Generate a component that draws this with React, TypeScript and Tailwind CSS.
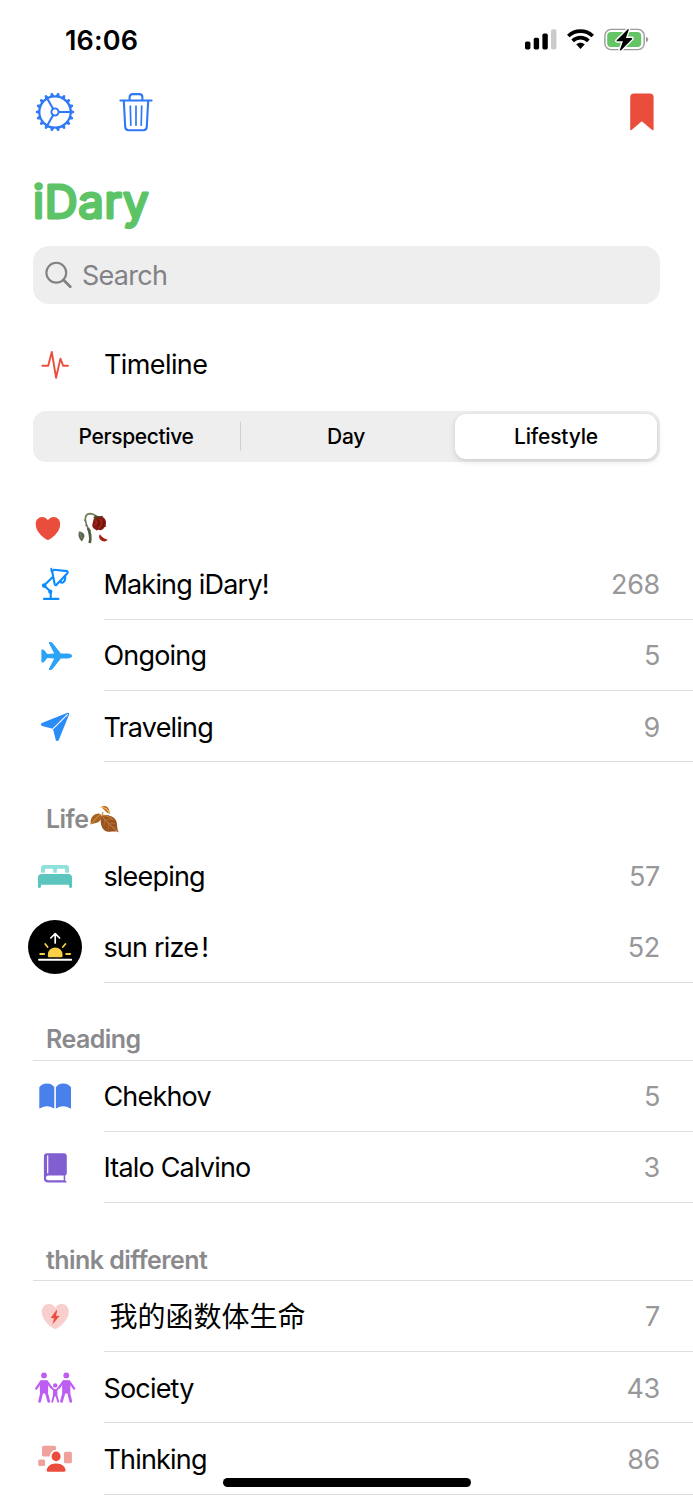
import React from "react";

type IconProps = { children: React.ReactNode };

function Glyph({ children }: IconProps) {
  return (
    <svg width="54" height="54" viewBox="0 0 54 54" fill="none" className="block shrink-0">
      {children}
    </svg>
  );
}

const LampIcon = () => (
  <Glyph>
    <g stroke="#0a8cff" strokeWidth="2.1" strokeLinecap="round" strokeLinejoin="round">
      <path d="M16 41.9H30.4M22.7 41.5V34.8L16 28.4L25 19.8M23.3 11.9L23.8 14.6L26 12.8L39.2 14.1Q40.2 14.8 39.4 16.2L28.5 27.8Q27.2 28.8 26.7 27.2L24.2 14.6" />
      <path d="M32 24.6C34.3 26.6 37.6 25.6 37.2 18.8" />
      <circle cx="16.2" cy="28.6" r="1.3" fill="#0a8cff" />
      <circle cx="22.3" cy="34.7" r="1.1" fill="#0a8cff" />
    </g>
  </Glyph>
);

const PlaneIcon = () => (
  <Glyph>
    <path
      fill="#2ca3f7"
      d="M44.1 27C44.1 28.6 41.6 29.4 39 29.4H32.8L24.4 40.3Q23.8 41 22.8 41H21.4Q20.5 41 20.9 40L26.2 29.4L19.4 29.1L15.8 33.2Q15.5 33.6 14.9 33.6H14.1Q13.4 33.6 13.4 32.8V21.2Q13.4 20.4 14.1 20.4H14.9Q15.5 20.4 15.8 20.8L19.4 24.9L26.2 24.6L20.9 14Q20.5 13 21.4 13H22.8Q23.8 13 24.4 13.7L32.8 24.6H39C41.6 24.6 44.1 25.4 44.1 27Z"
    />
  </Glyph>
);

const PaperPlaneIcon = () => (
  <Glyph>
    <path
      fill="#2b8cf8"
      d="M13.3 23.2L39.4 12.8Q41.6 12.3 41.1 14.4L30.9 39.8Q30 41.6 28.4 40.8Q27.8 40.4 27.6 39.4L25.3 30.1L23.7 28.4L14 25.9Q12 24.6 13.3 23.2Z"
    />
    <path d="M24.2 29.7L39.6 14.3" stroke="#fff" strokeWidth="1.1" />
  </Glyph>
);

const BedIcon = () => (
  <Glyph>
    <path
      fill="#90e0dc"
      d="M13 23.8V18.8Q13 15.9 16 15.9H38Q41 15.9 41 18.8V23.8H37.2V21.2Q37.2 19.8 35.8 19.8H30.2Q28.8 19.8 28.8 21.2V23.8H25.3V21.2Q25.3 19.8 23.9 19.8H18.3Q16.9 19.8 16.9 21.2V23.8Z"
    />
    <path
      fill="#5bc5be"
      d="M14 25H40Q44.1 25 44.1 29V37.6Q44.1 38.9 42.8 38.9H42.2Q41 38.9 41 37.6V35.8H13V37.6Q13 38.9 11.8 38.9H11.2Q9.9 38.9 9.9 37.6V29Q9.9 25 14 25Z"
    />
  </Glyph>
);

const SunriseIcon = () => (
  <Glyph>
    <circle cx="27" cy="27" r="27" fill="#000" />
    <path d="M27.2 23V13.8M22.8 18L27.2 13.6L31.6 18" stroke="#fff" strokeWidth="1.7" strokeLinecap="round" strokeLinejoin="round" />
    <path d="M20.6 37.2Q19.6 37.2 19.8 34.8A7.4 7.4 0 0 1 34.6 34.8Q34.8 37.2 33.8 37.2Z" fill="#f8cf45" />
    <path d="M17.2 24L19.6 27M37.4 24L34.8 27M12.2 34H16.2M38.2 34H42.2" stroke="#f8cf45" strokeWidth="1.8" strokeLinecap="round" />
    <path d="M11 39.8H43.2" stroke="#fff" strokeWidth="1.9" strokeLinecap="round" />
  </Glyph>
);

const OpenBookIcon = () => (
  <Glyph>
    <path
      fill="#4a80ec"
      d="M11.3 18.2Q13.6 14.4 19 14.4Q24.2 14.4 26.3 18.2V39Q26.3 39.5 25.7 39.3Q22.5 37.2 19 37.2Q15.6 37.2 12.2 39.3Q11.3 39.6 11.3 38.8ZM27.9 18.2Q30 14.4 35.2 14.4Q40.6 14.4 43 18.2V38.8Q43 39.6 42 39.3Q38.6 37.2 35.2 37.2Q31.6 37.2 28.5 39.3Q27.9 39.5 27.9 39Z"
    />
  </Glyph>
);

const ClosedBookIcon = () => (
  <Glyph>
    <path
      fill="#815fd1"
      d="M19.2 12.3H35.7Q38.8 12.3 38.8 15.4V32.2Q38.8 33.8 37.2 34.6V39.4L38.4 40.2Q39 41.4 38 41.4H19.6Q15.9 41.4 15.9 37.6V15.6Q15.9 12.3 19.2 12.3Z"
    />
    <path d="M19.7 14.8V31.8" stroke="#fff" strokeWidth="1.2" strokeLinecap="round" />
    <path d="M20 34.6H35.7V39.3H20Q17.9 39 17.9 37Q17.9 34.8 20 34.6Z" fill="#fff" />
  </Glyph>
);

const HeartBoltIcon = () => (
  <Glyph>
    <path
      fill="#f8cfcd"
      d="M27.3 39.2C25.6 39.2 13.7 31.4 13.7 21.8C13.7 17.2 16.7 13.9 20.9 13.9C23.8 13.9 26 15.4 27.3 17.8C28.6 15.4 30.9 13.9 33.7 13.9C37.9 13.9 40.8 17.2 40.8 21.8C40.8 31.4 29 39.2 27.3 39.2Z"
    />
    <path fill="#eb4d3d" d="M28.5 20.1L22.7 28.1L26.1 28.3L24.4 34.4L31.5 26L28 25.7L29.2 20.7Z" />
  </Glyph>
);

const FamilyIcon = () => (
  <Glyph>
    <g fill="#bd5df1" stroke="#bd5df1" strokeLinecap="round" strokeLinejoin="round">
      <circle cx="16" cy="14.4" r="2.9" stroke="none" />
      <circle cx="38.3" cy="14.4" r="2.9" stroke="none" />
      <circle cx="27.2" cy="24.4" r="2.2" stroke="none" />
      <path d="M13.2 19.8H18.8L19.6 24.5L19.4 32H12.6L12.4 24.5Z" strokeWidth="1.2" />
      <path d="M35.5 19.8H41.1L41.9 24.5L41.7 32H34.9L34.7 24.5Z" strokeWidth="1.2" />
      <path fill="none" strokeWidth="2.3" d="M13.2 20.4L8.2 27.6M18.8 20.4L23.1 26.4M35.5 20.4L31.2 26.4M41.1 20.4L46.2 27.6" />
      <path fill="none" strokeWidth="2.8" d="M14.1 30L11.6 40.3M17.9 30L20.8 40.3M36.4 30L33.5 40.3M40.2 30L42.8 40.3" />
      <path fill="none" strokeWidth="1.9" d="M22.8 25.8L26 29.2L25.9 34.5L24.2 40.7M31.6 25.8L28.4 29.2L28.5 34.5L30.2 40.7M27.2 29V34.5" />
    </g>
  </Glyph>
);

const PersonScreensIcon = () => (
  <Glyph>
    <g fill="#f1a19b">
      <rect x="14" y="13.8" width="14" height="10.8" rx="1.6" />
      <rect x="10.2" y="27.5" width="6.9" height="6.5" rx="1.5" />
      <rect x="35.9" y="19.8" width="8" height="11.5" rx="1.5" />
    </g>
    <ellipse cx="28.1" cy="24.3" rx="6.2" ry="6.6" fill="#fff" />
    <ellipse cx="28.1" cy="24.4" rx="4.5" ry="4.9" fill="#eb4d3d" />
    <path fill="#eb4d3d" d="M18.7 38.3C18.7 35 22 31.4 28.1 31.4C34.2 31.4 37.5 35 37.5 38.3Q37.5 39.8 35.9 39.8H20.3Q18.7 39.8 18.7 38.3Z" />
  </Glyph>
);

const teeth = Array.from({ length: 18 }, (_, i) => i * 20);

const GearIcon = () => (
  <svg width="42" height="42" viewBox="-21 -21 42 42" fill="none" stroke="#2f78f6" className="block">
    <circle r="15.7" strokeWidth="2.2" />
    <circle r="3.6" strokeWidth="1.9" />
    <path d="M3.6 0H15.8M-1.8 -3.1L-7.9 -13.7M-1.8 3.1L-7.9 13.7" strokeWidth="2.1" />
    {teeth.map((angle) => (
      <path key={angle} d="M16.4 -1.3L18.6 -.5V.5L16.4 1.3Z" strokeWidth="1.2" strokeLinejoin="round" fill="#2f78f6" transform={`rotate(${angle})`} />
    ))}
  </svg>
);

const TrashIcon = () => (
  <svg width="34" height="42" viewBox="0 0 34 42" fill="none" stroke="#2f78f6" strokeLinecap="round" strokeLinejoin="round" className="block">
    <path strokeWidth="2.1" d="M1.4 9.5H32.6M10.6 9V6.2Q10.6 3.1 13.7 3.1H20.3Q23.4 3.1 23.4 6.2V9M4.8 9.6L6.2 35.8Q6.5 39.2 9.8 39.2H24.2Q27.5 39.2 27.8 35.8L29.2 9.6" />
    <path strokeWidth="1.7" d="M11.3 15L11.8 34.2M17 15V34.2M22.7 15L22.2 34.2" />
  </svg>
);

const StatusIcons = () => (
  <div className="flex items-center">
    <svg width="32" height="24" viewBox="0 0 32 24" className="mr-[10px] block">
      <rect x="0" y="13.6" width="5.4" height="7.8" rx="1.6" />
      <rect x="8.7" y="9.8" width="5.4" height="11.6" rx="1.6" />
      <rect x="17.4" y="5.6" width="5.4" height="15.8" rx="1.6" />
      <rect x="26" y="1.2" width="5.4" height="20.2" rx="1.6" fill="#cbcbcb" />
    </svg>
    <svg width="27" height="24" viewBox="0 0 27 24" fill="none" stroke="#000" strokeWidth="3.7" className="mr-[10px] block">
      <path d="M1.3 8C8.2 1.4 18.8 1.4 25.7 8" />
      <path d="M5.6 12.9C10.2 8.6 16.8 8.6 21.4 12.9" />
      <path d="M9.2 16.3C11.8 14.1 15.2 14.1 17.8 16.3L13.5 21Z" fill="#000" stroke="none" />
    </svg>
    <svg width="45" height="24" viewBox="0 0 45 24" className="block">
      <rect x=".9" y="1.4" width="39.3" height="20.2" rx="6.2" fill="none" stroke="#9b9b9b" strokeWidth="1.4" />
      <path d="M42 8.7Q44.2 9.4 44.2 11.5Q44.2 13.6 42 14.3Z" fill="#9b9b9b" />
      <rect x="3.2" y="3.9" width="34" height="15.2" rx="3.8" fill="#65c466" />
      <path
        d="M23.8 1.2L12.6 12.4Q12 13.2 13.2 13.3H18.9L15.9 21.8Q15.9 23 17.1 22.2L28.2 11Q28.8 10 27.6 9.9H21.9L24.8 1.8Q24.8 .6 23.8 1.2Z"
        stroke="#fff"
        strokeWidth="2.8"
        paintOrder="stroke"
      />
    </svg>
  </div>
);

const WiltedRose = () => (
  <svg width="31" height="32" viewBox="0 0 31 32" fill="none" className="block">
    <path d="M11.5 31C13 24 11 18 8.3 12C6.3 6 7.2 2 12 1.6C15 1.6 17 3 18.8 5" stroke="#77805f" strokeWidth="1.8" />
    <path d="M11.8 31C13.2 25 12 20 10 16" stroke="#525d40" strokeWidth="2.6" />
    <path d="M7.5 9L5.9 7.8M8.9 13.8L7.3 13.4M11.5 19L13 18" stroke="#5c6549" strokeWidth="1" />
    <path d="M4 29.5C.3 26.5 0 22.5 1 19.5C3.5 19.6 6.3 21 6.5 23.8C6.2 26.5 4.9 27.3 4 29.5Z" fill="#58654a" />
    <path d="M1.8 20.5L4 26.5" stroke="#8a9273" strokeWidth=".8" />
    <path d="M15.6 7.2C18.2 3.4 22.3 3.4 25 5.2C27.2 6.2 28.8 9.7 27.7 12.7L28.1 14.4L26.6 15.1C25.6 17.8 22.4 18.8 20.4 17.8L18.5 18.4L17 17.2C14.4 16.4 13.7 13.8 14.6 11.6Z" fill="#841a12" />
    <path d="M17 8C19.5 9 19 12 16 13.4M22 7C24.5 10 24 14 20 16" stroke="#a32618" strokeWidth="1.5" />
    <path d="M20 8C22 10 21.4 14 19 15.5M26 9C26.5 12 25 14 23 16" stroke="#5c100b" strokeWidth="1" />
    <path d="M15 6L17.5 3.2L21 4.2L25.4 3.7L24 5.4L20.5 5.2L17.5 6.6Z" fill="#4d4a2c" />
    <path d="M21.9 22.2C23.6 24 24.4 26.2 29.5 27.5C28.5 30.3 23.6 30 21.7 26.8C20.8 25.3 21 23.4 21.9 22.2Z" fill="#a42016" />
  </svg>
);

const FallenLeaves = () => (
  <svg width="30" height="29" viewBox="0 0 30 29" fill="none" className="block">
    <path d="M.7 19.6C-.2 12.8 3.4 8.8 8.6 8.6L11 9.3C12.5 13 9.8 17.9 4.6 18.3Z" fill="#a96321" />
    <path d="M1.2 18.8C4 15.5 7 12 11.4 8.7" stroke="#ddb06b" strokeWidth=".8" />
    <path d="M11.4 10.8C14.5 9.4 22.7 9.8 26 15.4C27.7 18.6 26.4 22.5 28.8 27.2C23.8 25.6 20 28 15.4 26C10.8 23.5 9.7 15.5 11.4 10.8Z" fill="#995220" />
    <path d="M11.8 11.2C17 17 22 22.5 28.5 27" stroke="#d79a53" strokeWidth=".8" />
    <path d="M14.8 14.6L21 14.3M18 18L24.8 18.5M14.7 14.8L14.2 20M18.5 19L18.5 24.2M22.2 22.2L25.5 22.5" stroke="#b97838" strokeWidth=".7" />
    <path d="M11.8 10.8C14 10 20 11 23 15" stroke="#bf7732" strokeWidth="1.4" />
    <path d="M10.8 2.3C14.5 -.4 19.7 1 19.7 8.7C15.7 8.2 15.6 4.8 10.8 2.3Z" fill="#b96b20" />
    <path d="M10.8 2.3C15 2.2 17.8 4.2 19.4 8" stroke="#edbd66" strokeWidth="1.2" />
    <path d="M12.2 10.8L12.9 7" stroke="#c79b5a" strokeWidth="1.3" />
  </svg>
);

type RowProps = {
  icon: React.ReactNode;
  label: React.ReactNode;
  count: number;
  line?: boolean;
};

function Row({ icon, label, count, line = true }: RowProps) {
  return (
    <li className="flex h-[71.2px] items-stretch pl-7">
      <div className="mr-[22px] flex items-center">{icon}</div>
      <div className={`flex flex-1 items-center justify-between border-b pr-[33px] pt-[3px] ${line ? "border-[#dedede]" : "border-transparent"}`}>
        <span className="-ml-[0.6px] whitespace-nowrap text-[27px] tracking-[-0.8px] text-black">{label}</span>
        <span className="text-[27px] tracking-[-0.3px] text-[#98989b]">{count}</span>
      </div>
    </li>
  );
}

function SectionTitle({ children, line = true }: { children: React.ReactNode; line?: boolean }) {
  return (
    <div className="flex h-[78px] items-end pl-[33px]">
      <h2 className={`flex h-[42px] flex-1 items-center border-b pl-[13px] pt-[2px] text-[25px] font-semibold tracking-[-0.55px] text-[#8a8a8d] ${line ? "border-[#dedede]" : "border-transparent"}`}>
        {children}
      </h2>
    </div>
  );
}

export default function App() {
  return (
    <div className="relative flex h-[1500px] w-[693px] flex-col overflow-hidden bg-white font-['Inter','Noto_Sans_CJK_SC',sans-serif] text-black">
      <div className="flex h-[80px] shrink-0 items-center justify-between pl-[65px] pr-[44px]">
        <span className="pt-[2px] text-[27px] font-semibold tracking-[0.15px]">16:06</span>
        <StatusIcons />
      </div>

      <div className="flex h-[64px] shrink-0 items-center pl-[34px] pr-[39px]">
        <GearIcon />
        <div className="ml-[43px]">
          <TrashIcon />
        </div>
        <svg width="24" height="38" viewBox="0 0 24 38" className="ml-auto block">
          <path fill="#eb4d3d" d="M4 .6H20Q23.6 .6 23.6 4.4V36Q23.6 38.2 21.9 36.8L11.8 28.2L1.8 36.8Q.2 38.2 .2 36V4.4Q.2 .6 4 .6Z" />
        </svg>
      </div>

      <h1 className="h-[102px] shrink-0 pl-[30px] pt-[26px]">
        <svg width="130" height="64" viewBox="0 0 130 64" className="block">
          <text x="3" y="47.8" textLength="115.5" fontFamily="Inter" fontSize="45.5" fontWeight="400" fill="#5cc466" stroke="#5cc466" strokeWidth="3" strokeLinejoin="round">
            iDary
          </text>
        </svg>
      </h1>

      <div className="ml-[33px] flex h-[58px] w-[627px] shrink-0 items-center rounded-[16px] bg-[#eeeeee] pl-[12px]">
        <svg width="28" height="28" viewBox="0 0 28 28" fill="none" stroke="#828286" strokeLinecap="round" className="block">
          <circle cx="11.3" cy="11.7" r="9.9" strokeWidth="2.1" />
          <path d="M18.6 19L25.3 25.7" strokeWidth="2.8" />
        </svg>
        <span className="ml-[9px] pt-[3px] text-[27px] tracking-[-0.75px] text-[#828286]">Search</span>
      </div>

      <div className="flex h-[107px] shrink-0 items-center pl-[41px] pt-[14px]">
        <svg width="28" height="30" viewBox="0 0 28 30" fill="none" className="block">
          <path d="M1.4 15.8H7.2L10.8 2L15.1 27.8L19.4 8.6L22.2 15.8H27" stroke="#eb4d3d" strokeWidth="1.9" strokeLinecap="round" strokeLinejoin="round" />
        </svg>
        <span className="ml-[35px] pt-[2px] text-[27px] tracking-[-0.6px]">Timeline</span>
      </div>

      <div className="ml-[33px] flex h-[51px] w-[627px] shrink-0 items-center rounded-[13px] bg-[#eeeeee] text-[21px] font-medium tracking-[-0.35px]">
        <div className="w-[206px] text-center">Perspective</div>
        <div className="ml-px h-[29px] w-px bg-[#d0d0d0]" />
        <div className="w-[210px] text-center">Day</div>
        <div className="ml-[4px] flex h-[45px] w-[202px] items-center justify-center rounded-[11px] bg-white tracking-[-0.2px] shadow-[0_2px_6px_rgba(0,0,0,0.15)]">Lifestyle</div>
      </div>

      <div className="flex h-[86.8px] shrink-0 items-end pb-[5px] pl-[35px]">
        <svg width="26" height="25" viewBox="0 0 26 25" className="mb-[3px] block">
          <path fill="#eb4d3d" d="M12.9 24C11.3 24 .7 17 .7 8.2C.7 3.8 3.5 .9 7.2 .9C9.8 .9 11.7 2.2 12.9 4.3C14.2 2.2 16.1 .9 18.7 .9C22.4 .9 25.2 3.8 25.2 8.2C25.2 17 14.5 24 12.9 24Z" />
        </svg>
        <div className="ml-[17px]">
          <WiltedRose />
        </div>
      </div>

      <ul className="shrink-0">
        <Row icon={<LampIcon />} label="Making iDary!" count={268} />
        <Row icon={<PlaneIcon />} label="Ongoing" count={5} />
        <Row icon={<PaperPlaneIcon />} label="Traveling" count={9} />
      </ul>

      <section className="shrink-0">
        <SectionTitle line={false}>
          Life
          <span className="ml-[2px]">
            <FallenLeaves />
          </span>
        </SectionTitle>
        <ul>
          <Row icon={<BedIcon />} label="sleeping" count={57} line={false} />
          <Row
            icon={<SunriseIcon />}
            label={
              <>
                sun rize<span className="ml-[3px]">!</span>
              </>
            }
            count={52}
          />
        </ul>
      </section>

      <section className="shrink-0">
        <SectionTitle>Reading</SectionTitle>
        <ul>
          <Row icon={<OpenBookIcon />} label="Chekhov" count={5} />
          <Row icon={<ClosedBookIcon />} label="Italo Calvino" count={3} />
        </ul>
      </section>

      <section className="shrink-0">
        <SectionTitle>think different</SectionTitle>
        <ul>
          <Row icon={<HeartBoltIcon />} label={<span className="ml-[6px] text-[28px] tracking-[0px]">我的函数体生命</span>} count={7} />
          <Row icon={<FamilyIcon />} label="Society" count={43} />
          <Row icon={<PersonScreensIcon />} label="Thinking" count={86} />
        </ul>
      </section>

      <div className="absolute left-[223px] top-[1478px] h-[9px] w-[248px] rounded-full bg-black" />
    </div>
  );
}
